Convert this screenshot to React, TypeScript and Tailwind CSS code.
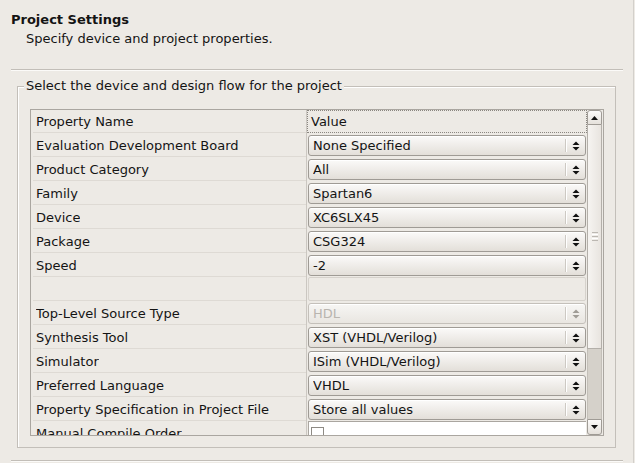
import React from "react";

type Row = {
  name: string;
  value?: string;
  disabled?: boolean;
  blank?: boolean;
  checkbox?: boolean;
};

const rows: Row[] = [
  { name: "Evaluation Development Board", value: "None Specified" },
  { name: "Product Category", value: "All" },
  { name: "Family", value: "Spartan6" },
  { name: "Device", value: "XC6SLX45" },
  { name: "Package", value: "CSG324" },
  { name: "Speed", value: "-2" },
  { name: "", blank: true },
  { name: "Top-Level Source Type", value: "HDL", disabled: true },
  { name: "Synthesis Tool", value: "XST (VHDL/Verilog)" },
  { name: "Simulator", value: "ISim (VHDL/Verilog)" },
  { name: "Preferred Language", value: "VHDL" },
  { name: "Property Specification in Project File", value: "Store all values" },
  { name: "Manual Compile Order", checkbox: true },
];

function Arrows({ color }: { color: string }) {
  return (
    <svg width="8" height="10" viewBox="0 0 8 10">
      <path d="M0.5 4 L4 0.5 L7.5 4 Z" fill={color} />
      <path d="M0.5 6 L7.5 6 L4 9.5 Z" fill={color} />
    </svg>
  );
}

function Combo({ value, disabled }: { value: string; disabled?: boolean }) {
  return (
    <div
      className={
        disabled
          ? "flex h-full items-center rounded-[3px] border border-[#c4c0ba] bg-gradient-to-b from-[#f7f6f4] to-[#e9e6e1] pl-[4px] shadow-[inset_0_1px_0_#ffffff]"
          : "flex h-full items-center rounded-[3px] border border-[#9f9b95] bg-gradient-to-b from-[#fbfaf9] to-[#e3dfd9] pl-[4px] shadow-[inset_0_1px_0_#ffffff]"
      }
    >
      <span
        className={
          disabled
            ? "flex-1 truncate leading-[16px] text-[#b9b5af]"
            : "flex-1 truncate leading-[16px] text-[#141414]"
        }
      >
        {value}
      </span>
      <div className="my-[3px] flex self-stretch">
        <div className="w-px bg-[#cdc9c3]" />
        <div className="w-px bg-[#ffffff]" />
      </div>
      <div className="flex w-[18px] justify-center">
        <Arrows color={disabled ? "#a09c96" : "#111111"} />
      </div>
    </div>
  );
}

function TableRow({ row }: { row: Row }) {
  return (
    <div className="flex h-[24px] flex-none">
      <div className="w-[275px] flex-none pl-[2px]">
        <div className="flex h-full items-center border-b border-[#dedad4] pl-[3px] pt-[2px] leading-[16px] text-[#141414]">
          <span className="truncate whitespace-nowrap">{row.name}</span>
        </div>
      </div>
      <div className="w-px flex-none bg-[#cbc7c1]" />
      <div className="w-[280px] flex-none px-[1px]">
        {row.blank ? (
          <div className="h-full rounded-[2px] border border-[#d6d2cc]" />
        ) : row.checkbox ? (
          <div className="h-full border-l border-t border-[#aaa6a0] bg-white pl-[2px] pt-[5px]">
            <div className="h-[13px] w-[13px] border border-[#8e8a84] bg-white" />
          </div>
        ) : (
          <div className="h-full pt-[2px] pb-[1px]">
            <Combo value={row.value || ""} disabled={row.disabled} />
          </div>
        )}
      </div>
    </div>
  );
}

function ScrollBar() {
  return (
    <div className="flex w-[16px] flex-none flex-col pr-[1px]">
      <div className="flex h-[15px] flex-none items-center justify-center rounded-t-[3px] border border-[#9f9b95] bg-gradient-to-b from-[#fbfaf9] to-[#e5e1db]">
        <svg width="7" height="4" viewBox="0 0 7 4">
          <path d="M0 4 L3.5 0 L7 4 Z" fill="#111111" />
        </svg>
      </div>
      <div className="flex h-[224px] flex-none items-center justify-center border-x border-b border-[#b3afa9] bg-gradient-to-r from-[#f6f4f1] to-[#e8e4df]">
        <div className="flex flex-col gap-[1px]">
          <div className="h-px w-[6px] bg-[#bcb8b2]" />
          <div className="h-px w-[6px] bg-white" />
          <div className="h-px w-[6px] bg-[#bcb8b2]" />
          <div className="h-px w-[6px] bg-white" />
          <div className="h-px w-[6px] bg-[#bcb8b2]" />
        </div>
      </div>
      <div className="flex-1 border-x border-[#c3bfb8] bg-[#d5d1ca]" />
      <div className="flex h-[16px] flex-none items-center justify-center rounded-b-[3px] border border-[#9f9b95] bg-gradient-to-b from-[#fbfaf9] to-[#e5e1db]">
        <svg width="7" height="4" viewBox="0 0 7 4">
          <path d="M0 0 L7 0 L3.5 4 Z" fill="#111111" />
        </svg>
      </div>
    </div>
  );
}

export default function App() {
  return (
    <div
      className="flex h-[463px] w-[635px] overflow-hidden bg-[#edeae5] text-[13px] text-[#141414]"
      style={{ fontFamily: '"DejaVu Sans", "Liberation Sans", sans-serif' }}
    >
      <div className="flex w-[633px] flex-none flex-col">
        <div className="pl-[11px] pt-[12px] text-[13px] font-bold leading-[16px]">
          Project Settings
        </div>
        <div className="mt-[3px] pl-[26px] leading-[16px]">
          Specify device and project properties.
        </div>
        <div className="ml-[11px] mt-[22px] w-[612px]">
          <div className="h-px bg-[#c2beb8]" />
          <div className="h-px bg-[#fbfaf8]" />
        </div>
        <div className="relative ml-[17px] mt-[15px] w-[599px] border border-[#c3bfb9] pb-[11px] pl-[12px] pr-[11px] pt-[22px] shadow-[inset_1px_1px_0_#ffffff]">
          <div className="absolute left-[6px] top-[-9px] bg-[#edeae5] px-[2px] leading-[16px]">
            Select the device and design flow for the project
          </div>
          <div className="flex h-[327px] w-[574px] border border-[#aaa6a0]">
            <div className="flex w-[556px] flex-none flex-col overflow-hidden">
              <div className="flex h-[23px] flex-none">
                <div className="w-[275px] flex-none pl-[2px]">
                  <div className="flex h-full items-center border-b border-[#dedad4] pl-[3px] pt-[2px] leading-[16px]">
                    Property Name
                  </div>
                </div>
                <div className="w-px flex-none bg-[#cbc7c1]" />
                <div className="flex w-[280px] flex-none items-center border border-dotted border-[#8a8680] pl-[3px] leading-[16px]">
                  Value
                </div>
              </div>
              {rows.map((r, i) => (
                <TableRow key={i} row={r} />
              ))}
            </div>
            <ScrollBar />
          </div>
        </div>
        <div className="ml-[11px] mt-[12px] w-[612px]">
          <div className="h-px bg-[#c2beb8]" />
          <div className="h-px bg-[#fbfaf8]" />
        </div>
      </div>
      <div className="w-px flex-none bg-[#d3d0cb]" />
    </div>
  );
}
